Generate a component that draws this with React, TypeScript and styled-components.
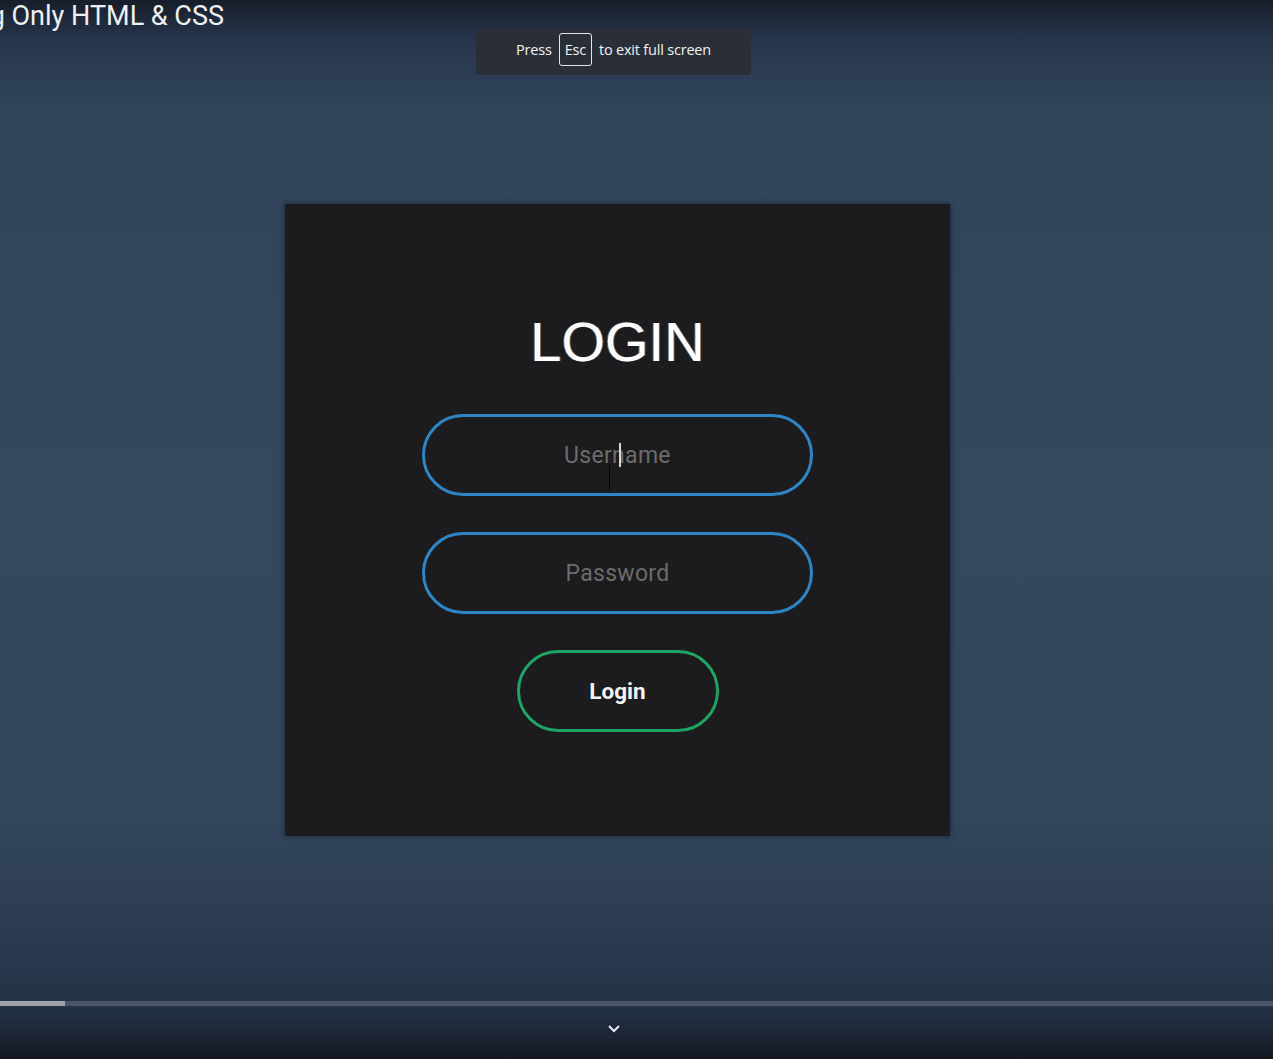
import React from "react";
import styled, { createGlobalStyle } from "styled-components";

const Global = createGlobalStyle`
  html, body { margin: 0; padding: 0; }
  body {
    width: 1273px;
    height: 1059px;
    overflow: hidden;
    font-family: Roboto, "Liberation Sans", sans-serif;
    background: linear-gradient(to bottom, #171e2a 0px, #283750 45px, #31445c 110px, #34485f 500px, #33465e 820px, #2c3c53 920px, #263449 990px);
  }
`;

const Page = styled.div`
  position: relative;
  width: 1273px;
  height: 1059px;
  display: flex;
  flex-direction: column;
`;

const TitleBar = styled.div`
  height: 40px;
  width: 224px;
  display: flex;
  justify-content: flex-end;
  overflow: hidden;
`;

const VideoTitle = styled.div`
  white-space: nowrap;
  font-family: Roboto, "Liberation Sans", sans-serif;
  font-size: 27px;
  line-height: 32px;
  color: #eef0f3;
  flex-shrink: 0;
`;

const Toast = styled.div`
  position: absolute;
  left: 476px;
  top: 28px;
  width: 275px;
  height: 47px;
  box-sizing: border-box;
  padding-bottom: 5px;
  background: #2a2f37;
  display: flex;
  align-items: center;
  justify-content: center;
  gap: 7px;
  font-family: "Open Sans", "Noto Sans", sans-serif;
  font-size: 14.5px;
  letter-spacing: -0.2px;
  color: #f2f2f2;
`;

const Key = styled.span`
  border: 1px solid #e6e6e6;
  border-radius: 3px;
  height: 31px;
  padding: 0 5px;
  display: flex;
  align-items: center;
`;

const Stage = styled.div`
  flex: 1;
  padding: 164px 0 0 285px;
`;

const Card = styled.div`
  width: 665px;
  height: 632px;
  background: #1c1b1e;
  box-shadow: 0 0 6px rgba(10, 15, 25, 0.6);
  display: flex;
  flex-direction: column;
  align-items: center;
  padding-top: 106px;
  box-sizing: border-box;
  gap: 36px;
`;

const Heading = styled.h1`
  margin: 0 0 4px 0;
  font-family: "Liberation Sans", Arial, sans-serif;
  font-weight: 400;
  font-size: 56px;
  line-height: 64px;
  color: #ffffff;
  text-shadow: -1px 0 0 rgba(120, 200, 255, 0.5), 1px 0 0 rgba(255, 190, 120, 0.45);
`;

const Field = styled.div`
  position: relative;
  width: 391px;
  height: 82px;
  box-sizing: border-box;
  border: 3px solid #2f86c6;
  border-radius: 41px;
  display: flex;
  align-items: center;
  justify-content: center;
  font-family: Roboto, "Liberation Sans", sans-serif;
  font-size: 23px;
  color: #6c6c6c;
  letter-spacing: 0.3px;
`;

const Caret = styled.span`
  position: absolute;
  left: 194px;
  top: 26px;
  width: 2px;
  height: 24px;
  background: #d8d8d8;
`;

const IBeam = styled.span`
  position: absolute;
  left: 184px;
  top: 48px;
  width: 1px;
  height: 25px;
  background: #050505;
`;

const Button = styled.div`
  width: 202px;
  height: 82px;
  box-sizing: border-box;
  border: 3px solid #1fa463;
  border-radius: 41px;
  display: flex;
  align-items: center;
  justify-content: center;
  font-family: Roboto, "Liberation Sans", sans-serif;
  font-weight: 700;
  font-size: 22.5px;
  color: #f4f4f4;
`;

const Progress = styled.div`
  height: 5px;
  background: #4b5669;
  display: flex;
`;

const Played = styled.div`
  width: 65px;
  background: #9ea3ab;
`;

const Controls = styled.div`
  height: 53px;
  background: linear-gradient(to bottom, #243246 0px, #1f2a3b 20px, #121720 53px);
  display: flex;
  justify-content: center;
  padding: 18px 45px 0 0;
  box-sizing: border-box;
`;

export default function App() {
  return (
    <>
      <Global />
      <Page>
        <TitleBar>
          <VideoTitle>Animated Login Form Using Only HTML &amp; CSS</VideoTitle>
        </TitleBar>
        <Toast>
          <span>Press</span>
          <Key>Esc</Key>
          <span>to exit full screen</span>
        </Toast>
        <Stage>
          <Card>
            <Heading>LOGIN</Heading>
            <Field>
              Username
              <Caret />
              <IBeam />
            </Field>
            <Field>Password</Field>
            <Button>Login</Button>
          </Card>
        </Stage>
        <Progress>
          <Played />
        </Progress>
        <Controls>
          <svg width="14" height="9" viewBox="0 0 14 9">
            <path d="M2 2 L7 7 L12 2" fill="none" stroke="#e8eaee" strokeWidth="2" />
          </svg>
        </Controls>
      </Page>
    </>
  );
}
